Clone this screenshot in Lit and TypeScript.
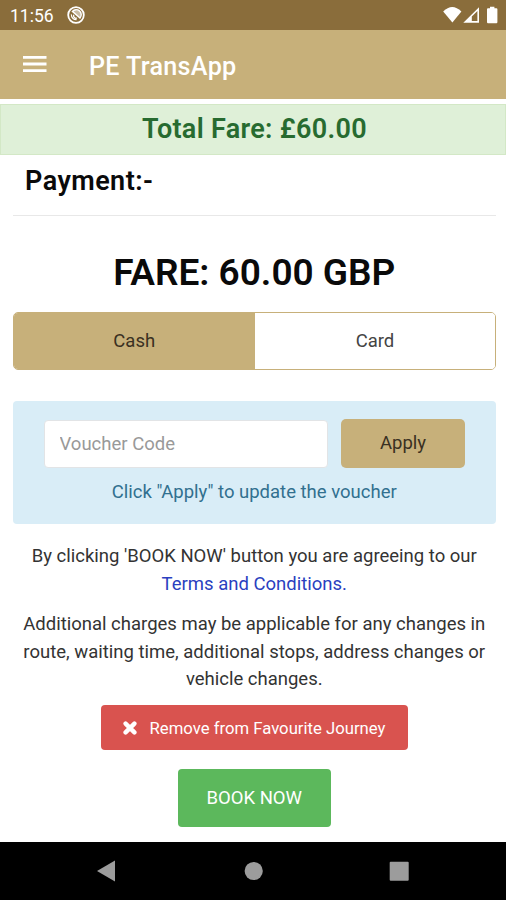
import { LitElement, html, css } from "lit";
import { customElement, state } from "lit/decorators.js";
import { classMap } from "lit/directives/class-map.js";

@customElement("status-bar")
class StatusBar extends LitElement {
  static styles = css`
    :host { display: flex; height: 30px; background: #8a6d3b; color: #fff; align-items: center; }
    .time { margin-left: 10px; font-size: 17.5px; line-height: 30px; padding-top: 2px; width: 57px; white-space: nowrap; }
    .spacer { flex: 1; }
    svg { display: block; }
    .right { width: 64px; height: 30px; }
  `;
  render() {
    return html`
      <span class="time">11:56</span>
      <svg width="18" height="18" viewBox="0 0 18 18" fill="none" stroke="#fff">
        <circle cx="9" cy="9" r="7.8" stroke-width="1.8" />
        <path d="M5.4 5.4A5 5 0 0 1 13 12Z" fill="#fff" fill-opacity=".55" stroke-width="1.4" />
        <path d="M4.4 8.4A4.8 4.8 0 0 0 9.6 13.6" stroke-width="1.2" />
        <path d="M6.8 8.8A2.4 2.4 0 0 0 10 12" stroke-width="1.3" />
      </svg>
      <span class="spacer"></span>
      <svg class="right" viewBox="0 0 64 30" fill="#fff">
        <path d="M1.2 11.6Q10.2 2.6 19.4 11.6L10.4 22.6Z" />
        <path fill-rule="evenodd" d="M37 7.2V22.8H21.3ZM35.4 11L29.8 16.6V21.1H35.4Z" />
        <path d="M46 8.2h2V6.8h4.4v1.4h2q1 0 1 1V22q0 1.2-1 1.2H46q-1 0-1-1.2V9.2q0-1 1-1Z" />
      </svg>
    `;
  }
}

@customElement("app-bar")
class AppBar extends LitElement {
  static styles = css`
    :host { display: flex; align-items: center; height: 68.5px; background: #c7b07a; color: #fff; }
    .menu { margin-left: 23px; width: 24px; display: block; }
    .title { margin-left: 42px; font-size: 25.2px; letter-spacing: .3px; font-weight: 500; white-space: nowrap; padding-top: 4px; }
  `;
  render() {
    return html`
      <svg class="menu" width="24" height="18" viewBox="0 0 24 18" fill="#fff">
        <path d="M0 1h23.5v2.8H0zM0 7.6h23.5v2.8H0zM0 14.2h23.5V17H0z" />
      </svg>
      <span class="title">PE TransApp</span>
    `;
  }
}

@customElement("nav-bar")
class NavBar extends LitElement {
  static styles = css`
    :host { display: block; height: 58.5px; background: #000; }
    svg { display: block; }
  `;
  render() {
    return html`
      <svg width="506" height="58" viewBox="0 0 506 58" fill="#9c9c9c">
        <path d="M97 29L115 18.6V39.4Z" />
        <circle cx="253.7" cy="29" r="9.1" />
        <rect x="389.7" y="19.7" width="19" height="19" rx="1" />
      </svg>
    `;
  }
}

@customElement("app-root")
class AppRoot extends LitElement {
  @state() method = "Cash";

  static styles = css`
    :host {
      display: flex; flex-direction: column; width: 506px; height: 900px; overflow: hidden;
      background: #fff; color: #333; font-family: Roboto, "Liberation Sans", sans-serif;
    }
    * { box-sizing: border-box; }
    .total {
      margin-top: 5.5px; height: 51px; background: #dff0d8; border: 1px solid #d3e8c6;
      color: #276b30; font-size: 27px; font-weight: 600; letter-spacing: .3px; line-height: 49px; text-align: center;
      padding-left: 3px; white-space: nowrap;
    }
    main { flex: 1; padding: 0 10px 0 12.5px; display: flex; flex-direction: column; align-items: stretch; }
    .payment {
      margin: 0; height: 61px; border-bottom: 1.5px solid #e8e8e8; padding-left: 12.5px;
      font-size: 27px; font-weight: 600; letter-spacing: .45px; line-height: 53px; color: #0a0a0a;
    }
    .fare { margin: 0; height: 96px; padding-top: 22px; font-size: 37px; font-weight: 600; line-height: 70px; text-align: center; color: #0a0a0a; white-space: nowrap; }
    .methods { display: flex; height: 58px; border: 1.5px solid #c7b07a; border-radius: 5px; overflow: hidden; }
    button { font: inherit; border: 0; padding: 0; margin: 0; white-space: nowrap; }
    .method { flex: 1; background: #fff; color: #444; font-size: 18.5px; }
    .method.on { flex: 0 0 241.5px; background: #c7b07a; color: #3a3122; }
    .voucher {
      margin-top: 31px; height: 122.5px; background: #d9edf7; border-radius: 4px;
      padding: 17.5px 31px 0; color: #31708f;
    }
    .row { display: flex; align-items: flex-end; gap: 13px; }
    input {
      flex: 1; min-width: 0; height: 48px; border: 1px solid #e2e4e6; border-radius: 4px; background: #fff;
      padding: 0 15px; font: 18.5px Roboto, sans-serif; color: #333;
    }
    input::placeholder { color: #999; opacity: 1; }
    .apply { width: 124px; height: 49px; border-radius: 5px; background: #c7b07a; color: #3a3122; font-size: 18.5px; }
    .hint { margin: 0; line-height: 28px; padding-top: 10px; text-align: center; font-size: 18.5px; }
    .copy { margin: 0; font-size: 18.5px; line-height: 27.8px; text-align: center; white-space: nowrap; }
    .agree { margin-top: 19.5px; }
    .charges { margin-top: 12.2px; }
    .link { color: #2a3fc0; }
    .remove {
      align-self: center; margin-top: 11.3px; width: 307.5px; height: 45px; border-radius: 4px; background: #d9534f;
      color: #fff; font-size: 16.7px; display: flex; align-items: center; justify-content: center; gap: 12.5px;
    }
    .remove span { padding-top: 1px; }
    .book { align-self: center; margin-top: 19px; width: 153px; height: 58px; border-radius: 4px; background: #5cb85c; color: #fff; font-size: 18.5px; }
  `;

  render() {
    return html`
      <status-bar></status-bar>
      <app-bar></app-bar>
      <div class="total">Total Fare: £60.00</div>
      <main>
        <h2 class="payment">Payment:-</h2>
        <h1 class="fare">FARE: 60.00 GBP</h1>
        <div class="methods">
          ${["Cash", "Card"].map(
            (m) => html`<button class=${classMap({ method: true, on: m === this.method })} @click=${() => (this.method = m)}>${m}</button>`
          )}
        </div>
        <section class="voucher">
          <div class="row">
            <input placeholder="Voucher Code" />
            <button class="apply">Apply</button>
          </div>
          <p class="hint">Click "Apply" to update the voucher</p>
        </section>
        <p class="copy agree">By clicking 'BOOK NOW' button you are agreeing to our<br /><span class="link">Terms and Conditions.</span></p>
        <p class="copy charges">Additional charges may be applicable for any changes in<br />route, waiting time, additional stops, address changes or<br />vehicle changes.</p>
        <button class="remove">
          <svg width="14" height="14" viewBox="0 0 14 14"><path d="M2.6 2.6L11.4 11.4M11.4 2.6L2.6 11.4" stroke="#fff" stroke-width="4.4" stroke-linecap="round" /></svg>
          <span>Remove from Favourite Journey</span>
        </button>
        <button class="book">BOOK NOW</button>
      </main>
      <nav-bar></nav-bar>
    `;
  }
}
